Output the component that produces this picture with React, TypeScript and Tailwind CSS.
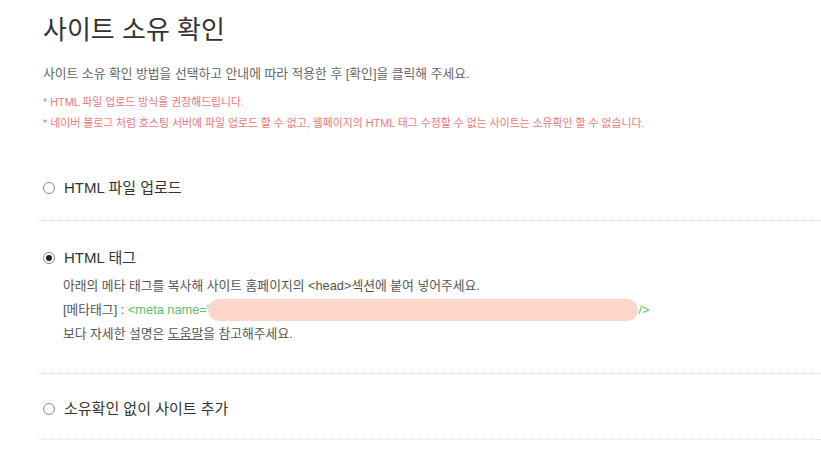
import React from 'react';

const font = { fontFamily: '"Liberation Sans", "Noto Sans CJK KR", sans-serif' };

const Radio: React.FC<{ checked?: boolean }> = ({ checked }) => (
  <span className="w-[12px] h-[12px] rounded-full border border-[#8a8a8a] bg-white flex items-center justify-center shrink-0">
    {checked && <span className="w-[6px] h-[6px] rounded-full bg-[#222]" />}
  </span>
);

const Option: React.FC<{ label: string; checked?: boolean }> = ({ label, checked }) => (
  <div className="flex items-center gap-[9px] h-[20px] pl-[5px]">
    <Radio checked={checked} />
    <span className="text-[15px] leading-[20px] text-[#333]">{label}</span>
  </div>
);

const App: React.FC = () => {
  return (
    <div className="w-[821px] h-[454px] bg-white overflow-hidden" style={font}>
      <div className="pl-[43px] pt-[14px]">
        <h1 className="text-[26px] leading-[32px] text-[#333] font-normal">사이트 소유 확인</h1>
        <p className="mt-[18px] text-[12.8px] leading-[20px] text-[#666]">
          사이트 소유 확인 방법을 선택하고 안내에 따라 적용한 후 [확인]을 클릭해 주세요.
        </p>
        <p className="mt-[8px] text-[10.85px] leading-[20px] text-[#ea7a7a]">* HTML 파일 업로드 방식을 권장해드립니다.</p>
        <p className="mt-[1px] text-[10.85px] leading-[20px] text-[#ea7a7a]">
          * 네이버 블로그 처럼 호스팅 서버에 파일 업로드 할 수 없고, 웹페이지의 HTML 태그 수정할 수 없는 사이트는 소유확인 할 수 없습니다.
        </p>
      </div>

      <div className="ml-[38px] mt-[45px]">
        <div className="pb-[22px] border-b border-dotted border-[#dcdcdc]">
          <Option label="HTML 파일 업로드" />
        </div>

        <div className="pt-[27px] pb-[27px] border-b border-dotted border-[#dcdcdc]">
          <Option label="HTML 태그" checked />
          <div className="mt-[6px] pl-[25px] text-[12.8px] leading-[24px] text-[#555]">
            <p>아래의 메타 태그를 복사해 사이트 홈페이지의 &lt;head&gt;섹션에 붙여 넣어주세요.</p>
            <p className="flex items-center">
              <span>[메타태그] :&nbsp;</span>
              <span className="text-[#5cbf6a]">&lt;meta name="</span>
              <span className="inline-block w-[430px] h-[22px] rounded-full bg-[#ffd6cc] -ml-[3px]" />
              <span className="text-[#5cbf6a]">/&gt;</span>
            </p>
            <p>
              보다 자세한 설명은 <span className="underline">도움말</span>을 참고해주세요.
            </p>
          </div>
        </div>

        <div className="pt-[25px] pb-[20px] border-b border-dotted border-[#dcdcdc]">
          <Option label="소유확인 없이 사이트 추가" />
        </div>
      </div>
    </div>
  );
};

export default App;
